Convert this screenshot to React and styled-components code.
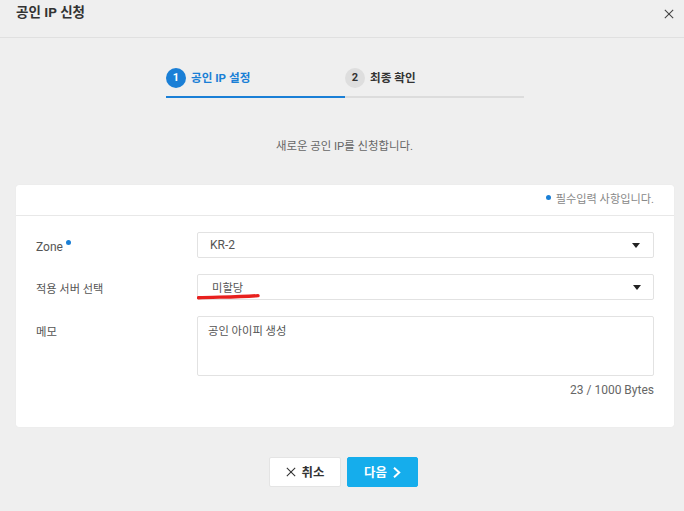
import React from "react";
import styled, { createGlobalStyle } from "styled-components";

const Global = createGlobalStyle`
  html, body { margin: 0; padding: 0; background: #efefef; }
  body { font-family: Roboto, "Noto Sans CJK KR", sans-serif; }
  * { box-sizing: border-box; }
`;
const Page = styled.div`
  width: 684px; height: 511px; overflow: hidden; background: #efefef;
  display: flex; flex-direction: column;
`;
const Header = styled.header`
  height: 38px; flex: none; border-bottom: 1px solid #e0e0e0;
  display: flex; justify-content: space-between; padding: 3px 10px 0 16px;
`;
const Title = styled.h1`
  margin: 0; font-size: 13.5px; line-height: 18px; font-weight: 700; color: #333;
`;
const CloseBtn = styled.span`
  display: flex; width: 10px; height: 10px; margin-top: 6px;
`;
const Steps = styled.div`
  display: flex; margin: 30px 0 0 166px; height: 30px;
`;
const Step = styled.div`
  width: 179px; height: 30px; display: flex; gap: 5px; align-items: flex-start;
  border-bottom: 2px solid ${p => (p.$active ? "#1a7fd6" : "#dcdcdc")};
  font-size: 11.6px; line-height: 20px; font-weight: 700;
  color: ${p => (p.$active ? "#1a7fd6" : "#333")};
`;
const StepNum = styled.span`
  width: 20px; height: 20px; border-radius: 50%; flex: none;
  display: flex; align-items: center; justify-content: center;
  font-size: 11px; font-weight: 700;
  background: ${p => (p.$active ? "#1a7fd6" : "#dedede")};
  color: ${p => (p.$active ? "#fff" : "#333")};
`;
const Desc = styled.p`
  margin: 39px 0 0; padding-left: 5px; height: 18px; text-align: center; font-size: 11.4px; line-height: 18px; color: #666;
`;
const Card = styled.section`
  margin: 30px 10px 0 16px; height: 242px; background: #fff; border-radius: 3px;
  display: flex; flex-direction: column;
  box-shadow: 0 0 1px rgba(0,0,0,.08);
`;
const CardTop = styled.div`
  height: 31px; flex: none; border-bottom: 1px solid #e8e8e8;
  display: flex; justify-content: flex-end; align-items: flex-start; gap: 5px;
  padding: 6px 20px 0 0; font-size: 11.2px; line-height: 18px; color: #888;
`;
const Dot = styled.span`
  width: 5px; height: 5px; border-radius: 50%; background: #1a7fd6; flex: none;
  margin-top: ${p => p.$top}px;
`;
const Form = styled.div`
  padding: 16px 20px 0 20px; display: flex; flex-direction: column; gap: 16px;
`;
const Row = styled.div`
  display: grid; grid-template-columns: 161px 457px; align-items: start; position: relative;
`;
const Label = styled.label`
  display: flex; gap: 3px; font-size: ${p => p.$size}px; line-height: 18px; color: #555; padding-top: ${p => p.$pt}px;
`;
const Select = styled.div`
  height: 26px; border: 1px solid #e2e2e2; border-radius: 2px; background: #fff;
  display: flex; justify-content: space-between; align-items: center;
  padding: 0 ${p => p.$pr}px 0 ${p => p.$pl}px; font-size: ${p => p.$size}px; color: #555;
`;
const Caret = styled.span`
  width: 0; height: 0; border-left: 4px solid transparent; border-right: 4px solid transparent;
  border-top: 5px solid #222;
`;
const Memo = styled.div`
  height: 60px; border: 1px solid #e2e2e2; border-radius: 2px; padding: 6px 10px;
  font-size: 11.3px; line-height: 18px; color: #555;
`;
const Count = styled.div`
  grid-column: 2; text-align: right; margin-top: 5px; font-size: 12px; line-height: 18px; color: #666;
`;
const Scribble = styled.svg`
  position: absolute; left: 161px; top: 19px; width: 65px; height: 7px;
`;
const Actions = styled.div`
  display: flex; gap: 6px; margin: 30px 0 0 269px;
`;
const Button = styled.button`
  width: ${p => p.$w}px; height: 30px; padding: 0; border-radius: 2px;
  display: flex; align-items: center; justify-content: center; gap: ${p => p.$gap}px;
  font: 700 12.4px Roboto, "Noto Sans CJK KR", sans-serif;
  background: ${p => (p.$primary ? "#15adec" : "#fff")};
  color: ${p => (p.$primary ? "#fff" : "#333")};
  border: 1px solid ${p => (p.$primary ? "#15adec" : "#e4e4e4")};
`;
const X = ({ size, color }) => (
  <svg width={size} height={size} viewBox="0 0 12 12" fill="none" stroke={color} strokeWidth="1.3">
    <path d="M1 1L11 11M11 1L1 11" />
  </svg>
);

export default function App() {
  return (
    <Page>
      <Global />
      <Header>
        <Title>공인 IP 신청</Title>
        <CloseBtn><X size={10} color="#444" /></CloseBtn>
      </Header>
      <Steps>
        <Step $active><StepNum $active>1</StepNum>공인 IP 설정</Step>
        <Step><StepNum>2</StepNum>최종 확인</Step>
      </Steps>
      <Desc>새로운 공인 IP를 신청합니다.</Desc>
      <Card>
        <CardTop><Dot $top={4} />필수입력 사항입니다.</CardTop>
        <Form>
          <Row>
            <Label $pt={6} $size={12}>Zone<Dot $top={2} /></Label>
            <Select $pl={12} $pr={13} $size={12}>KR-2<Caret /></Select>
          </Row>
          <Row>
            <Label $pt={7} $size={11.2}>적용 서버 선택</Label>
            <Select $pl={14} $pr={12} $size={11.3}>미할당<Caret /></Select>
            <Scribble viewBox="0 0 65 7">
              <path d="M1.5 4.8C18 4 40 4.2 61 2.6" stroke="#e8201e" strokeWidth="3.4" strokeLinecap="round" fill="none" />
            </Scribble>
          </Row>
          <Row>
            <Label $pt={7} $size={11.4}>메모</Label>
            <Memo>공인 아이피 생성</Memo>
            <Count>23 / 1000 Bytes</Count>
          </Row>
        </Form>
      </Card>
      <Actions>
        <Button $w={72} $gap={6}><X size={10} color="#333" />취소</Button>
        <Button $primary $w={71} $gap={6}>다음
          <svg width="8" height="11" viewBox="0 0 8 11" fill="none" stroke="#fff" strokeWidth="2"><path d="M1 .8l5.2 4.7L1 10.2" /></svg>
        </Button>
      </Actions>
    </Page>
  );
}
